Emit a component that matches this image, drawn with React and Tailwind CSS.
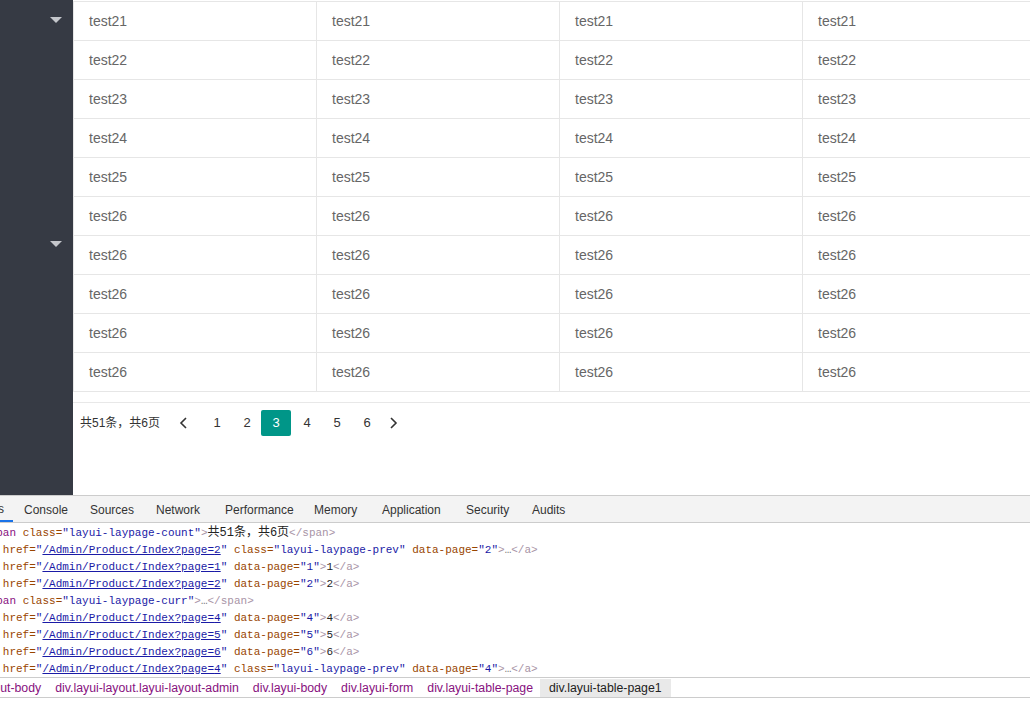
import React from 'react'

const rows = ['test21', 'test22', 'test23', 'test24', 'test25', 'test26', 'test26', 'test26', 'test26', 'test26']

const codeLines = [
  { tag: 'span', attrs: [['class', 'layui-laypage-count']], body: '共51条，共6页', cjk: true },
  { tag: 'a', href: 2, attrs: [['class', 'layui-laypage-prev'], ['data-page', '2']], body: '…' },
  { tag: 'a', href: 1, attrs: [['data-page', '1']], body: '1' },
  { tag: 'a', href: 2, attrs: [['data-page', '2']], body: '2' },
  { tag: 'span', attrs: [['class', 'layui-laypage-curr']], body: '…' },
  { tag: 'a', href: 4, attrs: [['data-page', '4']], body: '4' },
  { tag: 'a', href: 5, attrs: [['data-page', '5']], body: '5' },
  { tag: 'a', href: 6, attrs: [['data-page', '6']], body: '6' },
  { tag: 'a', href: 4, attrs: [['class', 'layui-laypage-prev'], ['data-page', '4']], body: '…' },
]

// tab widths taken from the devtools strip
const tabs = [
  { name: 'Elements', w: 'w-[70px]' },
  { name: 'Console', w: 'w-[66px]' },
  { name: 'Sources', w: 'w-[66px]' },
  { name: 'Network', w: 'w-[69px]' },
  { name: 'Performance', w: 'w-[89px]' },
  { name: 'Memory', w: 'w-[68px]' },
  { name: 'Application', w: 'w-[84px]' },
  { name: 'Security', w: 'w-[66px]' },
  { name: 'Audits', w: 'w-[60px]' },
]

const crumbs = ['div.layui-layout-body', 'div.layui-layout.layui-layout-admin', 'div.layui-body', 'div.layui-form', 'div.layui-table-page']

const Arrow = () => (
  <div className="w-0 h-0 border-x-[6px] border-x-transparent border-t-[6px] border-t-[#c4c6cb]" />
)

const Chevron = ({ dir }) => (
  <svg width="9" height="12" viewBox="0 0 9 12" fill="none">
    {dir === 'left'
      ? <path d="M7 1 L2 6 L7 11" stroke="#333" strokeWidth="1.6" />
      : <path d="M2 1 L7 6 L2 11" stroke="#333" strokeWidth="1.6" />}
  </svg>
)

const CodeLine = ({ line }) => (
  <div className="h-[17px] leading-[17px] whitespace-pre">
    <span className="text-[#a894a6]">&lt;</span>
    <span className="text-[#881280]">{line.tag}</span>
    {line.href && (
      <>
        <span className="text-[#994500]"> href=</span>
        <span className="text-[#1a1aa6]">"</span>
        <span className="text-[#1a1aa6] underline">/Admin/Product/Index?page={line.href}</span>
        <span className="text-[#1a1aa6]">"</span>
      </>
    )}
    {line.attrs.map(([k, v]) => (
      <span key={k}>
        <span className="text-[#994500]"> {k}=</span>
        <span className="text-[#1a1aa6]">"{v}"</span>
      </span>
    ))}
    <span className="text-[#a894a6]">&gt;</span>
    {line.cjk
      ? <span className="text-[12px] text-[#222] font-['Liberation_Mono','Noto_Sans_CJK_SC',monospace]">{line.body}</span>
      : <span className={line.body === '…' ? 'text-[#777]' : 'text-[#222]'}>{line.body}</span>}
    <span className="text-[#a894a6]">&lt;/{line.tag}&gt;</span>
  </div>
)

const App = () => {
  return (
    <div className="w-[1030px] h-[701px] overflow-hidden bg-white font-['Liberation_Sans','Noto_Sans_CJK_SC',sans-serif]">
      {/* page */}
      <div className="flex h-[495px]">
        <div className="w-[73px] shrink-0 bg-[#363a44] flex flex-col items-end pr-[11px]">
          <div className="h-[241px] pt-[17px]">
            <Arrow />
          </div>
          <Arrow />
        </div>

        <div className="flex-1 flex flex-col overflow-hidden">
          <div className="mt-[1px] border-t border-l border-[#e6e6e6] flex flex-col">
            {rows.map((r, i) => (
              <div key={i} className="flex h-[39px] border-b border-[#e6e6e6] shrink-0">
                {[0, 1, 2, 3].map(c => (
                  <div key={c} className="w-[243px] shrink-0 border-r border-[#e6e6e6] pl-[15px] flex items-center text-[14px] text-[#666]">
                    {r}
                  </div>
                ))}
              </div>
            ))}
          </div>

          <div className="mt-[10px] border-t border-[#e8e8e8]">
            <div className="mt-[7px] flex items-center h-[26px] pl-[7px] text-[#333]">
              <span className="text-[12px] w-[81px]">共51条，共6页</span>
              <div className="ml-[7px] w-[30px] h-[26px] flex items-center justify-center">
                <Chevron dir="left" />
              </div>
              <div className="ml-[4px] flex text-[13px]">
                {[1, 2, 3, 4, 5, 6].map(n => (
                  <div
                    key={n}
                    className={n === 3
                      ? 'w-[30px] h-[26px] -ml-[1px] mr-[1px] flex items-center justify-center bg-[#009688] text-white rounded-[2px]'
                      : 'w-[30px] h-[26px] flex items-center justify-center'}
                  >
                    {n}
                  </div>
                ))}
              </div>
              <div className="-ml-[1px] w-[24px] h-[26px] flex items-center justify-center">
                <Chevron dir="right" />
              </div>
            </div>
          </div>
        </div>
      </div>

      {/* devtools */}
      <div className="h-[28px] bg-[#f3f3f3] border-y border-[#cccccc] flex overflow-hidden">
        <div className="flex -ml-[57px] pt-[1px] text-[12px] text-[#333]">
          {tabs.map((t, i) => (
            <div key={t.name} className={i === 0
              ? `${t.w} shrink-0 pl-[11px] h-[25px] flex items-center border-b-2 border-[#1a73e8]`
              : `${t.w} shrink-0 pl-[11px] h-[25px] flex items-center`}>
              {t.name}
            </div>
          ))}
        </div>
      </div>

      <div className="h-[154px] pt-[2px] overflow-hidden font-['Liberation_Mono',monospace] text-[11px]">
        <div className="-ml-[17px]">
          {codeLines.map((l, i) => <CodeLine key={i} line={l} />)}
        </div>
      </div>

      <div className="h-[21px] border-y border-[#cccccc] flex overflow-hidden text-[12.3px]">
        <div className="flex -ml-[77px] h-full pt-[1px]">
          {crumbs.map(c => (
            <div key={c} className="px-[7px] flex items-center text-[#881280]">{c}</div>
          ))}
          <div className="px-[9px] flex items-center bg-[#e9e9e9] text-[#222]">div.layui-table-page1</div>
        </div>
      </div>
    </div>
  )
}

export default App
